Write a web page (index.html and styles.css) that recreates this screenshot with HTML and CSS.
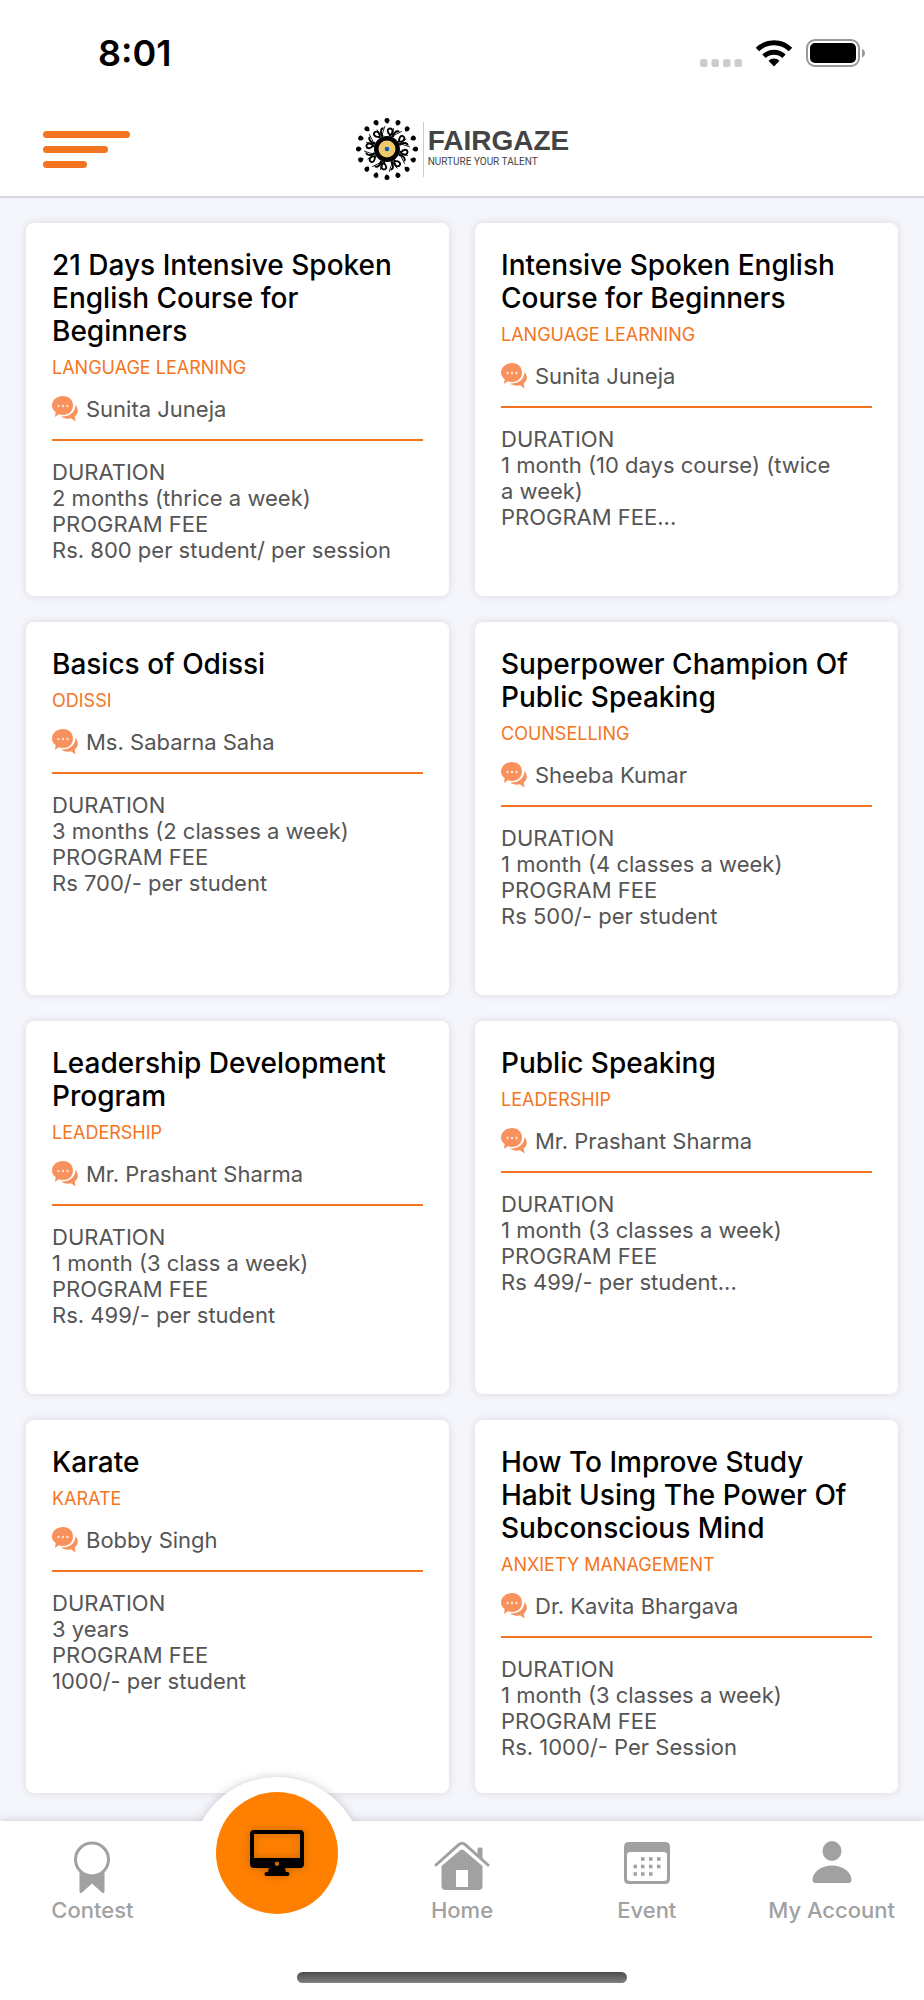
FILE: index.html
```html
<!DOCTYPE html>
<html lang="en">
<head>
  <meta charset="UTF-8" />
  <meta name="viewport" content="width=device-width, initial-scale=1" />
  <title>FairGaze</title>
  <link rel="stylesheet" href="styles.css">
</head>
<body>
  <svg width="0" height="0" class="sprite">
    <symbol id="chat" viewBox="0 0 26 26">
      <path d="M11 0C17 0 21 4 21 9.500S17 19 11 19c-1.500 0-3-.3-4.300-.8L3 21l.7-5C1.300 14.500 0 12.300 0 9.500 0 4 5 0 11 0z" fill="#f9915c"/>
      <path d="M23.500 9c3 3.500 3.300 8.500-.8 11.500l.8 5-4.500-3.200c-4 .9-7.500 0-10-1.800C17 21 23.500 16.500 23.500 9z" fill="#f9915c"/>
      <circle cx="6.500" cy="10" r="1.200" fill="#fde3d6"/>
      <circle cx="11" cy="10" r="1.200" fill="#fde3d6"/>
      <circle cx="15.500" cy="10" r="1.200" fill="#fde3d6"/>
    </symbol>
  </svg>

  <div class="status-bar">
    <time class="clock">8:01</time>
    <svg width="166" height="28" viewBox="0 0 166 28">
      <g fill="#ccc">
        <rect x="0" y="20" width="7.500" height="8" rx="2.500"/>
        <rect x="11.500" y="20" width="7.500" height="8" rx="2.500"/>
        <rect x="23" y="20" width="7.500" height="8" rx="2.500"/>
        <rect x="34.500" y="20" width="7.500" height="8" rx="2.500"/>
      </g>
      <g fill="none" stroke="#000" stroke-width="5">
        <path d="M57.500 10.500a23.500 23.500 0 0 1 33 0"/>
        <path d="M64 17.300a14.500 14.500 0 0 1 20 0"/>
      </g>
      <path d="M68.500 21.700a8 8 0 0 1 11 0L74 27.500z"/>
      <rect x="107" y="1" width="52" height="26" rx="8" fill="none" stroke="#999" stroke-width="2"/>
      <rect x="110" y="4" width="46" height="20" rx="5"/>
      <path d="M162 10c4 1.500 4 7 0 8.500z" fill="#999"/>
    </svg>
  </div>

  <header>
    <button class="menu-button" aria-label="Menu"><span></span><span></span><span></span></button>
    <a class="logo" href="#">
      <svg width="64" height="64" viewBox="-32 -32 64 64">
        <defs>
          <path id="dot" d="M-2.500-28.500a2.500 2.500 0 1 1 5 0q0 1.700-2.200 3.200q-2.800-1.400-2.800-3.200z"/>
          <g id="figure" fill="none" stroke="#000">
            <path d="M-4-12.500c-3-3-2.500-8 .5-8.200M2-13c4.500-1.500 4.500-7.500 1-7.500-3.200 0-3 4.500.5 6.500" stroke-width="1.900"/>
            <path d="M-6-11l4-12M5.500-12l1-9" stroke-width=".8"/>
          </g>
        </defs>
        <use href="#dot"/>
        <use href="#dot" transform="rotate(22.500)"/>
        <use href="#dot" transform="rotate(45)"/>
        <use href="#dot" transform="rotate(67.500)"/>
        <use href="#dot" transform="rotate(90)"/>
        <use href="#dot" transform="rotate(112.500)"/>
        <use href="#dot" transform="rotate(135)"/>
        <use href="#dot" transform="rotate(157.500)"/>
        <use href="#dot" transform="rotate(180)"/>
        <use href="#dot" transform="rotate(202.500)"/>
        <use href="#dot" transform="rotate(225)"/>
        <use href="#dot" transform="rotate(247.500)"/>
        <use href="#dot" transform="rotate(270)"/>
        <use href="#dot" transform="rotate(292.500)"/>
        <use href="#dot" transform="rotate(315)"/>
        <use href="#dot" transform="rotate(337.500)"/>
        <use href="#figure"/>
        <use href="#figure" transform="rotate(45)"/>
        <use href="#figure" transform="rotate(90)"/>
        <use href="#figure" transform="rotate(135)"/>
        <use href="#figure" transform="rotate(180)"/>
        <use href="#figure" transform="rotate(225)"/>
        <use href="#figure" transform="rotate(270)"/>
        <use href="#figure" transform="rotate(315)"/>
        <circle r="13"/>
        <circle r="8.500" fill="#f0c96c"/>
        <circle r="2.300" fill="#0a5cb8"/>
      </svg>
      <span class="logo-text">
        <span class="logo-name">FAIRGAZE</span>
        <span class="logo-tagline">NURTURE YOUR TALENT</span>
      </span>
    </a>
  </header>

  <main>
    <article class="card">
      <h2>21 Days Intensive Spoken English Course for Beginners</h2>
      <p class="category">LANGUAGE LEARNING</p>
      <p class="teacher"><svg width="26" height="26"><use href="#chat"/></svg>Sunita Juneja</p>
      <p class="details">DURATION<br>2 months (thrice a week)<br>PROGRAM FEE<br>Rs. 800 per student/ per session</p>
    </article>
    <article class="card">
      <h2>Intensive Spoken English Course for Beginners</h2>
      <p class="category">LANGUAGE LEARNING</p>
      <p class="teacher"><svg width="26" height="26"><use href="#chat"/></svg>Sunita Juneja</p>
      <p class="details">DURATION<br>1 month (10 days course) (twice a&nbsp;week)<br>PROGRAM FEE...</p>
    </article>
    <article class="card">
      <h2>Basics of Odissi</h2>
      <p class="category">ODISSI</p>
      <p class="teacher"><svg width="26" height="26"><use href="#chat"/></svg>Ms. Sabarna Saha</p>
      <p class="details">DURATION<br>3 months (2 classes a week)<br>PROGRAM FEE<br>Rs 700/- per student</p>
    </article>
    <article class="card">
      <h2>Superpower Champion Of Public Speaking</h2>
      <p class="category">COUNSELLING</p>
      <p class="teacher"><svg width="26" height="26"><use href="#chat"/></svg>Sheeba Kumar</p>
      <p class="details">DURATION<br>1 month (4 classes a week)<br>PROGRAM FEE<br>Rs 500/- per student</p>
    </article>
    <article class="card">
      <h2>Leadership Development Program</h2>
      <p class="category">LEADERSHIP</p>
      <p class="teacher"><svg width="26" height="26"><use href="#chat"/></svg>Mr. Prashant Sharma</p>
      <p class="details">DURATION<br>1 month (3 class a week)<br>PROGRAM FEE<br>Rs. 499/- per student</p>
    </article>
    <article class="card">
      <h2>Public Speaking</h2>
      <p class="category">LEADERSHIP</p>
      <p class="teacher"><svg width="26" height="26"><use href="#chat"/></svg>Mr. Prashant Sharma</p>
      <p class="details">DURATION<br>1 month (3 classes a week)<br>PROGRAM FEE<br>Rs 499/- per student...</p>
    </article>
    <article class="card">
      <h2>Karate</h2>
      <p class="category">KARATE</p>
      <p class="teacher"><svg width="26" height="26"><use href="#chat"/></svg>Bobby Singh</p>
      <p class="details">DURATION<br>3 years<br>PROGRAM FEE<br>1000/- per student</p>
    </article>
    <article class="card">
      <h2>How To Improve Study Habit Using The Power Of Subconscious Mind</h2>
      <p class="category">ANXIETY MANAGEMENT</p>
      <p class="teacher"><svg width="26" height="26"><use href="#chat"/></svg>Dr. Kavita Bhargava</p>
      <p class="details">DURATION<br>1 month (3 classes a week)<br>PROGRAM FEE<br>Rs. 1000/- Per Session</p>
    </article>
  </main>

  <nav>
    <div class="tabs">
      <a href="#">
        <svg width="56" height="56" viewBox="0 0 56 56">
          <circle cx="28" cy="19.500" r="16.500" fill="none" stroke="#a1a1a1" stroke-width="3"/>
          <path d="M15.500 31q12.500 8.500 25 0v20.500q-.5 2.500-2.500 1L28 43.500 18 52.500q-2 1.500-2.500-1z" fill="#a1a1a1"/>
        </svg>
        Contest
      </a>
      <a href="#" class="active" aria-label="Programs">
        <span class="bubble">
          <span class="bubble-icon">
            <svg width="56" height="48" viewBox="0 0 56 48">
              <path fill-rule="evenodd" d="M5 1h46q4 0 4 4v30q0 4-4 4H36l1 4h1.500q2 0 2 2t-2 2h-21q-2 0-2-2t2-2H19l1-4H5q-4 0-4-4V5q0-4 4-4zm0 4v24h46V5zM28 32.500a2 2 0 1 0 0 4.500 2 2 0 1 0 0-4.500z"/>
            </svg>
          </span>
        </span>
      </a>
      <a href="#">
        <svg width="56" height="56" viewBox="0 0 56 56">
          <path d="M2 25L25 4.500q3-2.500 6 0L54 25" fill="none" stroke="#a1a1a1" stroke-width="3" stroke-linecap="round"/>
          <path d="M43.500 17V9q0-1.500 1.500-1.500h2q1.500 0 1.500 1.500v12z" fill="#a1a1a1"/>
          <path fill-rule="evenodd" d="M7.500 26L26.500 10q1.500-1 3 0L48.500 26v20q0 4-4 4h-33q-4 0-4-4zm14.500 4v17h12V30z" fill="#a1a1a1"/>
        </svg>
        Home
      </a>
      <a href="#">
        <svg width="56" height="56" viewBox="0 0 56 56">
          <path fill-rule="evenodd" d="M10 2h36q5 0 5 5v32q0 5-5 5H10q-5 0-5-5V7q0-5 5-5zm1 10q-3 0-3 3v23q0 3 3 3h34q3 0 3-3V15q0-3-3-3z" fill="#a1a1a1"/>
          <path d="M22 19h3.500M30 19h3.500M38 19h3.500M14.500 26.500h3.500M22 26.500h3.500M30 26.500h3.500M38 26.500h3.500M14.500 34h3.500M22 34h3.500M30 34h3.500" stroke="#a1a1a1" stroke-width="3.500"/>
        </svg>
        Event
      </a>
      <a href="#">
        <svg width="56" height="56" viewBox="0 0 56 56" fill="#a1a1a1">
          <ellipse cx="28" cy="11" rx="9.500" ry="10"/>
          <path d="M8.500 39.500C9 32 17 25.500 28 25.500s19 6.500 19.500 14q0 3.500-3 3.500h-33q-3 0-3-3.500z"/>
        </svg>
        My Account
      </a>
    </div>
    <div class="home-indicator"></div>
  </nav>
</body>
</html>
```
FILE: styles.css
```css
* {
  box-sizing: border-box;
}

body {
  margin: 0;
  height: 100vh;
  overflow: hidden;
  background: #f5f6fb;
  color: #555;
  font-family: Inter, "Liberation Sans", sans-serif;
  font-size: 22px;
  line-height: 26px;

  display: flex;
  flex-direction: column;
}

h2, p {
  margin: 0;
  font-weight: normal;
}
a {
  color: inherit;
  text-decoration: none;
}
.sprite {
  position: absolute;
}

/* status bar */
.status-bar {
  height: 102px;
  padding: 4px 58px 0 98px;
  background: #fff;

  display: flex;
  align-items: center;
  justify-content: space-between;
  flex-shrink: 0;
}
.clock {
  color: #000;
  font-size: 36px;
  font-weight: 600;
}

/* header */
header {
  height: 96px;
  padding: 0 43px;
  background: #fff;
  border-bottom: 2px solid #d9d9dc;

  display: grid;
  grid-template-columns: 1fr auto 1fr;
  align-items: center;
  flex-shrink: 0;
}
.menu-button {
  width: 87px;
  padding: 0;
  border: 0;
  background: none;

  display: flex;
  flex-direction: column;
  gap: 8px;
}
.menu-button span {
  width: 100%;
  height: 7px;
  border-radius: 4px;
  background: #f47521;
}
.menu-button span:nth-child(2) {
  width: 75%;
}
.menu-button span:nth-child(3) {
  width: 50%;
}
.logo {
  display: flex;
  align-items: center;
  gap: 4px;
}
.logo-text {
  height: 55px;
  padding-left: 4px;
  border-left: 1px solid #ccc;

  display: flex;
  flex-direction: column;
  justify-content: center;
}
.logo-name {
  color: #444;
  font-family: "Liberation Sans", sans-serif;
  font-size: 28px;
  font-weight: bold;
  line-height: 26px;
}
.logo-tagline {
  color: #444;
  font-family: Roboto, sans-serif;
  font-size: 10px;
  line-height: 16px;
}

/* course cards */
main {
  flex: 1;
  min-height: 0;
  overflow: hidden;
  padding: 25px 26px;

  display: grid;
  grid-template-columns: 1fr 1fr;
  grid-auto-rows: 373px;
  gap: 26px;
}
.card {
  padding: 26px;
  border-radius: 8px;
  background: #fff;
  box-shadow: 0 0 8px rgba(0, 0, 0, 0.12);
}
.card h2 {
  color: #000;
  font-size: 28px;
  font-weight: 500;
  line-height: 33px;
}
.category {
  margin-top: 9px;
  color: #f47521;
  font-size: 18px;
  line-height: 22px;
}
.teacher {
  margin-top: 17px;
  padding-bottom: 17px;
  border-bottom: 2px solid #f47521;

  display: flex;
  align-items: center;
  gap: 8px;
}
.details {
  margin-top: 18px;
}

/* bottom navigation, one shadow round the bar and its bubble */
nav {
  height: 179px;
  padding-top: 19px;
  background: #fff;
  color: #a1a1a1;
  font-weight: 500;
  filter: drop-shadow(0 0 5px rgba(0, 0, 0, 0.2));

  display: flex;
  flex-direction: column;
  justify-content: space-between;
  align-items: center;
  flex-shrink: 0;
}
.tabs {
  width: 100%;

  display: grid;
  grid-template-columns: repeat(5, 1fr);
}
.tabs a {
  position: relative;
  white-space: nowrap;

  display: flex;
  flex-direction: column;
  align-items: center;
  gap: 1px;
}
.bubble {
  position: absolute;
  top: -63px;
  width: 172px;
  height: 172px;
  padding-top: 15px;
  border-radius: 50%;
  background: #fff;
}
.bubble-icon {
  width: 122px;
  height: 122px;
  margin: 0 auto;
  border-radius: 50%;
  background: #ff8000;

  display: flex;
  align-items: center;
  justify-content: center;
}
.bubble svg {
  filter: drop-shadow(0 0 4px rgba(0, 0, 0, 0.25));
}
.home-indicator {
  width: 330px;
  height: 11px;
  margin-bottom: 17px;
  border-radius: 6px;
  background: linear-gradient(#4c4c4c, #808080);
}
```
